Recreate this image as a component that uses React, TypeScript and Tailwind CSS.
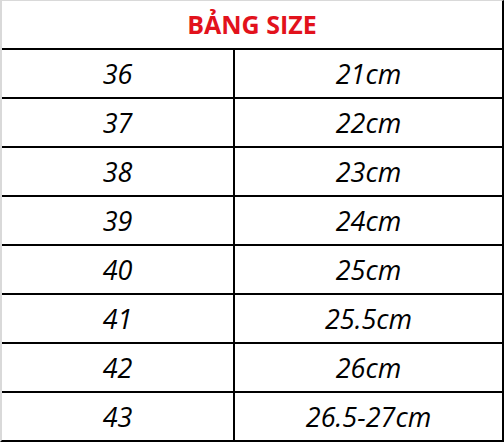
const rows = [
  ["36", "21cm"],
  ["37", "22cm"],
  ["38", "23cm"],
  ["39", "24cm"],
  ["40", "25cm"],
  ["41", "25.5cm"],
  ["42", "26cm"],
  ["43", "26.5-27cm"],
];

export default function App() {
  return (
    <div className="w-[504px] h-[442px] bg-white font-['Open_Sans',sans-serif] text-black">
      <div className="flex flex-col border-t border-t-[#d9d9d9] border-l-2 border-l-[#d9d9d9] border-r-2 border-r-black border-b-2 border-b-black">
        {/* Title */}
        <div className="h-[47px] flex items-center justify-center">
          <span className="text-[25px] font-bold text-[#e2121c] leading-none">
            BẢNG SIZE
          </span>
        </div>

        {rows.map(([size, length]) => (
          <div
            key={size}
            className="h-[49px] grid grid-cols-[233px_1fr] border-t-2 border-black"
          >
            <div className="flex items-center justify-center border-r-2 border-black text-[27px] italic leading-none">
              {size}
            </div>
            <div className="flex items-center justify-center text-[27px] italic leading-none">
              {length}
            </div>
          </div>
        ))}
      </div>
    </div>
  );
}
